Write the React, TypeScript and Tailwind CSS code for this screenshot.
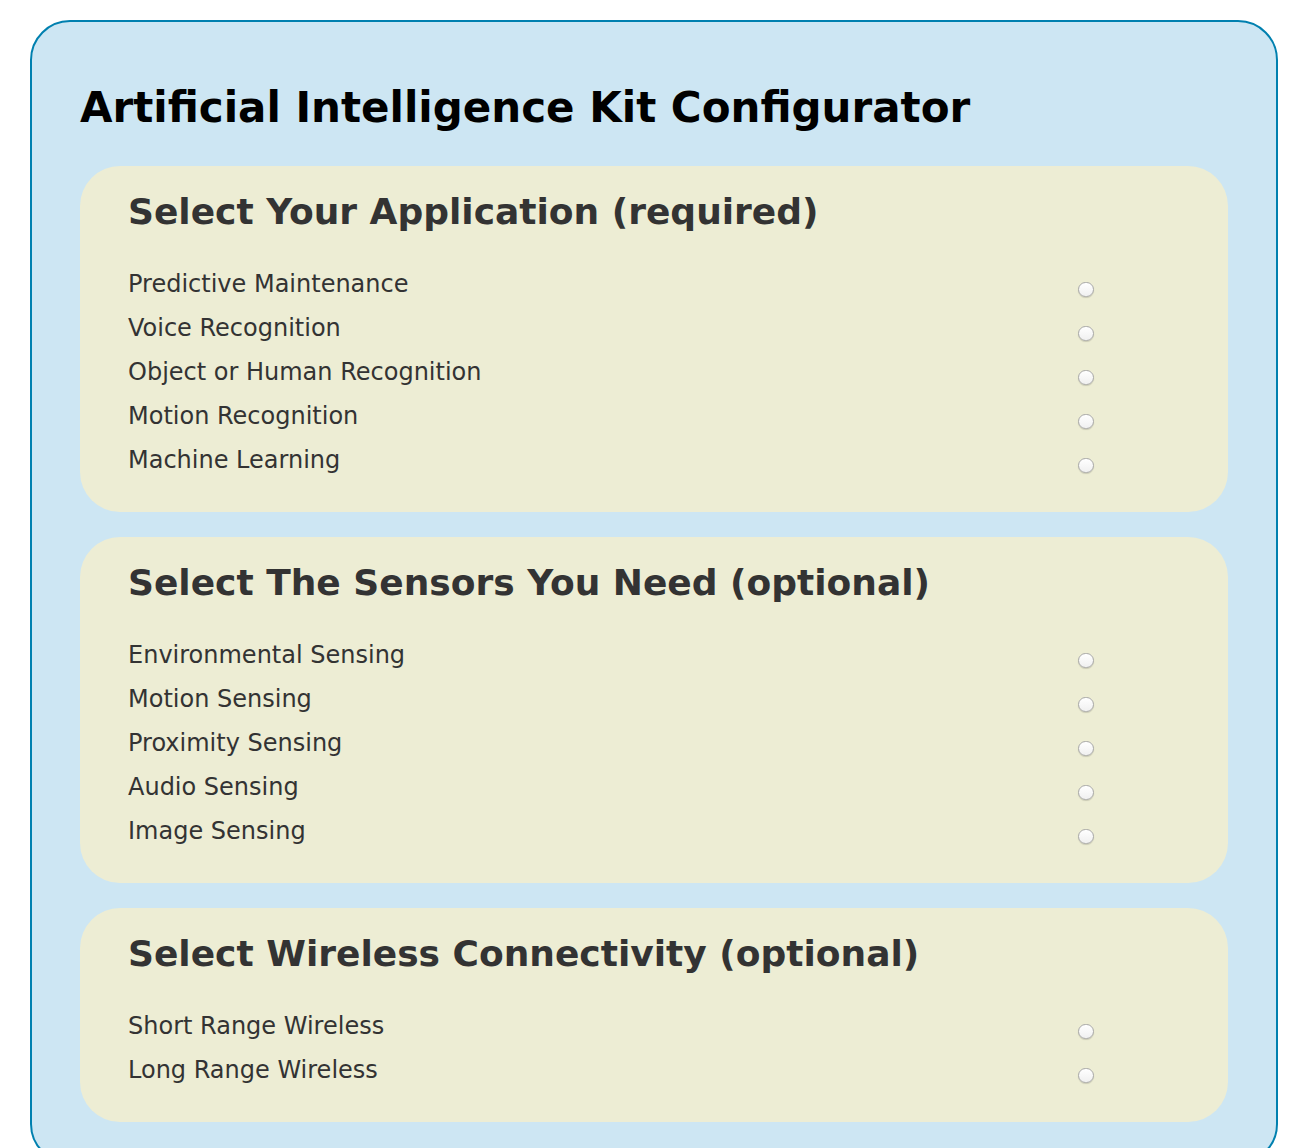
import React from "react";

const sections = [
  {
    title: "Select Your Application (required)",
    items: [
      "Predictive Maintenance",
      "Voice Recognition",
      "Object or Human Recognition",
      "Motion Recognition",
      "Machine Learning",
    ],
  },
  {
    title: "Select The Sensors You Need (optional)",
    items: [
      "Environmental Sensing",
      "Motion Sensing",
      "Proximity Sensing",
      "Audio Sensing",
      "Image Sensing",
    ],
  },
  {
    title: "Select Wireless Connectivity (optional)",
    items: ["Short Range Wireless", "Long Range Wireless"],
  },
];

const Radio: React.FC = () => (
  <span className="mt-[13px] h-[15px] w-[16px] shrink-0 rounded-full border border-[#a8a8a8] bg-gradient-to-b from-[#ffffff] to-[#f0f0f0] shadow-[0_1px_1px_rgba(0,0,0,0.15)]" />
);

export default function App() {
  return (
    <div className="min-h-[1148px] bg-white px-[30px] pt-[20px] font-['DejaVu_Sans',Verdana,sans-serif]">
      <div className="rounded-[40px] border-2 border-[#0080af] bg-[#cde6f3] px-[48px] pb-[40px] pt-[58px]">
        <h1 className="text-[42px] font-bold leading-[56px] text-black">
          Artificial Intelligence Kit Configurator
        </h1>
        <div className="mt-[30px] flex flex-col gap-[25px]">
          {sections.map((s) => (
            <div key={s.title} className="rounded-[40px] bg-[#ededd4] pb-[23px] pl-[48px] pr-[134px] pt-[22px]">
              <h2 className="text-[36px] font-bold leading-[48px] text-[#333333]">{s.title}</h2>
              <ul className="mt-[33px]">
                {s.items.map((it) => (
                  <li key={it} className="flex h-[44px] items-start justify-between text-[24px] leading-[30px] text-[#333333]">
                    <span>{it}</span>
                    <Radio />
                  </li>
                ))}
              </ul>
            </div>
          ))}
        </div>
      </div>
    </div>
  );
}
